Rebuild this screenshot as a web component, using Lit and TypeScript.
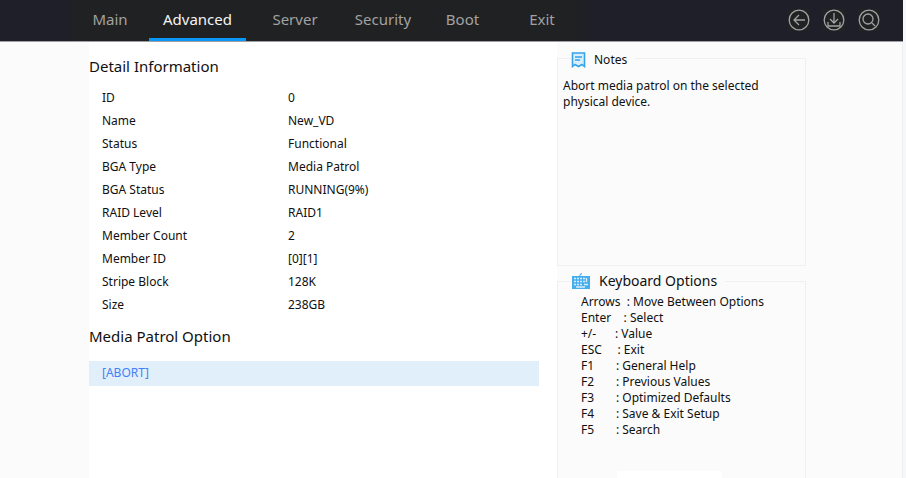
import { LitElement, html, css, svg } from "lit";
import { customElement, state } from "lit/decorators.js";
import { classMap } from "lit/directives/class-map.js";

const TABS = ["Main", "Advanced", "Server", "Security", "Boot", "Exit"];

const DETAILS: [string, string][] = [
  ["ID", "0"],
  ["Name", "New_VD"],
  ["Status", "Functional"],
  ["BGA Type", "Media Patrol"],
  ["BGA Status", "RUNNING(9%)"],
  ["RAID Level", "RAID1"],
  ["Member Count", "2"],
  ["Member ID", "[0][1]"],
  ["Stripe Block", "128K"],
  ["Size", "238GB"],
];

const KEYS = [
  "Arrows  : Move Between Options",
  "Enter    : Select",
  "+/-      : Value",
  "ESC     : Exit",
  "F1       : General Help",
  "F2       : Previous Values",
  "F3       : Optimized Defaults",
  "F4       : Save & Exit Setup",
  "F5       : Search",
];

const TOOLS = [
  { label: "Back", glyph: svg`<path d="M17 11H6M11 6L6 11l5 5"/>` },
  { label: "Save", glyph: svg`<path d="M11 4v10M7 10l4 4 4-4M5 13v4h12v-4"/>` },
  { label: "Search", glyph: svg`<circle cx="10" cy="10" r="5"/><path d="M14 14l3 3"/>` },
];

@customElement("app-root")
export class AppRoot extends LitElement {
  @state() private tab = "Advanced";

  static styles = css`
    :host {
      display: flex;
      flex-direction: column;
      min-height: 100vh;
      box-sizing: border-box;
      padding-right: 3px;
      background: #f5f7f8;
      color: #101010;
      font: 12px/16px "Noto Sans", "Open Sans", sans-serif;
    }
    button {
      font: inherit;
      border: 0;
      margin: 0;
      padding: 0;
      background: none;
      cursor: pointer;
    }
    .bar {
      display: flex;
      justify-content: space-between;
      align-items: stretch;
      height: 41px;
      background: linear-gradient(90deg, #1f1f29 71px, #202122 71px, #202122 575px, #1f1f29 592px);
      border-bottom: 1px solid #a0a0a4;
    }
    .tabs {
      display: grid;
      grid-template-columns: 78px 97px 98px 78px 81px 78px;
      margin-left: 71px;
    }
    .tab {
      font-size: 15px;
      line-height: 20px;
      padding: 5px 0;
      color: #a2a2a2;
      border-bottom: 3px solid transparent;
    }
    .current {
      color: #f4f4f4;
      border-bottom-color: #0a98f8;
    }
    .tools {
      display: flex;
      align-items: center;
      gap: 13px;
      margin-right: 23px;
    }
    .tool {
      display: block;
      width: 22px;
      height: 22px;
      margin-bottom: 2px;
      background: #212224;
    }
    .tool svg {
      display: block;
      fill: none;
      stroke: #a2a2a2;
      stroke-width: 1.3;
    }
    .body {
      flex: 1;
      display: grid;
      grid-template-columns: 89fr 468fr 249fr 96fr;
      background: #fbfbfb;
      border-right: 1px solid #edf0f2;
    }
    .main {
      grid-column: 2;
      background: #fff;
      padding: 14px 18px 0 0;
    }
    h2 {
      font-size: 15px;
      line-height: 20px;
      font-weight: 400;
      margin: 0;
    }
    table {
      width: 100%;
      table-layout: fixed;
      border-collapse: collapse;
      margin: 10px 0;
    }
    th,
    td {
      height: 23px;
      padding: 0 0 0 1px;
      font-weight: 400;
      text-align: left;
    }
    th {
      width: 44%;
      padding-left: 13px;
      box-sizing: border-box;
    }
    .abort {
      display: block;
      width: 100%;
      margin-top: 15px;
      padding: 4px 13px 5px;
      text-align: left;
      color: #4480f5;
      background: #e0effa;
    }
    .side {
      display: flex;
      flex-direction: column;
      padding-top: 6px;
    }
    fieldset {
      min-width: 0;
      margin: 0;
      padding: 0 5px;
      border: 1px solid #f0f0f0;
    }
    legend {
      display: flex;
      align-items: center;
      gap: 8px;
      height: 20px;
      box-sizing: border-box;
      margin-left: 8px;
      padding: 0 8px 0 0;
    }
    .notes {
      height: 218px;
      box-sizing: border-box;
      margin-bottom: 5px;
    }
    .notes legend {
      padding-top: 3px;
    }
    .notes p {
      margin: 10px 0 0;
    }
    .keys {
      flex: 1;
      display: flex;
      border-bottom: 0;
    }
    .keys legend {
      font-size: 14px;
      line-height: 20px;
    }
    .list {
      list-style: none;
      margin: 0;
      padding: 3px 0 0 18px;
      white-space: pre;
    }
    .keybody {
      display: flex;
      flex-direction: column;
      justify-content: space-between;
      flex: 1;
    }
    .patch {
      height: 7px;
      width: 105px;
      margin-left: 54px;
      background: #fff;
    }
  `;

  render() {
    return html`
      <header class="bar">
        <nav class="tabs">
          ${TABS.map(
            (t) => html`<button
              class=${classMap({ tab: true, current: t === this.tab })}
              @click=${() => (this.tab = t)}
            >${t}</button>`
          )}
        </nav>
        <div class="tools">
          ${TOOLS.map(
            (t) => html`<button class="tool" aria-label=${t.label}>
              <svg width="22" height="22" viewBox="0 0 22 22">
                <circle cx="11" cy="11" r="9.8" />${t.glyph}
              </svg>
            </button>`
          )}
        </div>
      </header>
      <div class="body">
        <main class="main">
          <h2>Detail Information</h2>
          <table>
            <tbody>
              ${DETAILS.map(([k, v]) => html`<tr><th scope="row">${k}</th><td>${v}</td></tr>`)}
            </tbody>
          </table>
          <h2>Media Patrol Option</h2>
          <button class="abort">[ABORT]</button>
        </main>
        <aside class="side">
          <fieldset class="notes">
            <legend>
              <svg width="15" height="16" viewBox="0 0 15 16" fill="#d9effc" stroke="#35a3ea" stroke-width="1.6">
                <path d="M1.5 1h12v13.5l-2.5-2-3.5 2-3.5-2-2.5 2z" />
                <path d="M4 5h7M4 8h5" />
              </svg>
              Notes
            </legend>
            <p>Abort media patrol on the selected physical device.</p>
          </fieldset>
          <fieldset class="keys">
            <legend>
              <svg width="20" height="18" viewBox="0 0 20 18">
                <path d="M9 4V2.5l2-1" fill="none" stroke="#35a3ea" />
                <path d="M1 4h18v13H1z" fill="#45aef0" />
                <path
                  d="M3 6.5h2M6 6.5h2M9 6.5h2M12 6.5h2M3 9.5h2M6 9.5h2M9 9.5h2M12 9.5h2M3 12.5h2M6 12.5h2M9 12.5h2M15.5 6v4M13 12.5h4M5 15h9"
                  fill="none"
                  stroke="#d9effc"
                  stroke-width="1.4"
                />
              </svg>
              Keyboard Options
            </legend>
            <div class="keybody">
              <ul class="list">${KEYS.map((k) => html`<li>${k}</li>`)}</ul>
              <div class="patch"></div>
            </div>
          </fieldset>
        </aside>
      </div>
    `;
  }
}
